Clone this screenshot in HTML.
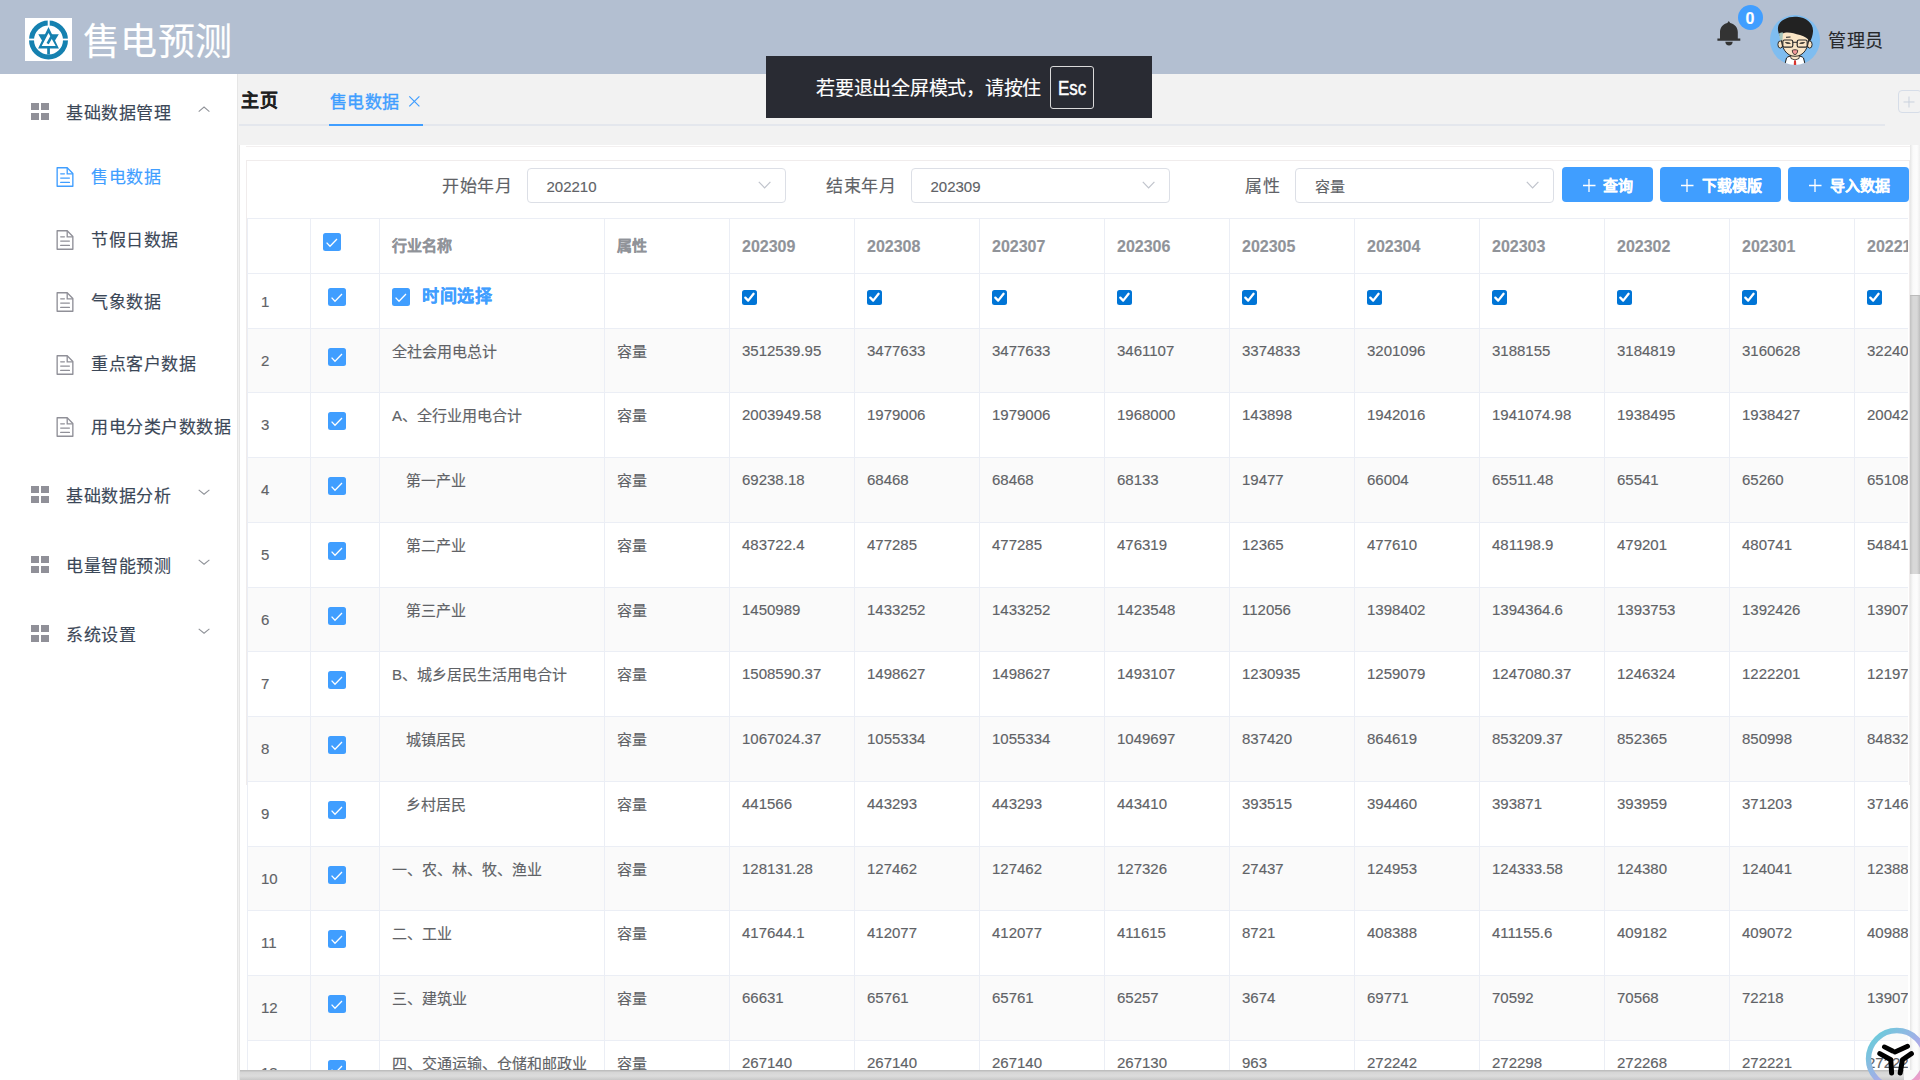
<!DOCTYPE html><html lang="zh-CN"><head><meta charset="utf-8"><style>
*{box-sizing:border-box}
html,body{margin:0;padding:0;width:1920px;height:1080px;overflow:hidden;background:#fff;font-family:'Liberation Sans', sans-serif}
.a{position:absolute;white-space:nowrap}
.t{position:absolute;white-space:nowrap;line-height:20px;-webkit-text-stroke:0.15px currentColor}
.cb{position:absolute;width:18px;height:18px;background:#409eff;border-radius:2.5px}
.cb svg{position:absolute;left:0;top:0}
.nc{position:absolute;width:15px;height:15px;background:#0075d6;border-radius:2.5px}
.nc svg{position:absolute;left:0;top:0}
.cell{font-size:15px;color:#606266}
.hd{font-size:15px;color:#909399;font-weight:bold}
.hdn{font-size:16px;color:#909399;font-weight:bold}
</style></head><body>

<div class="a" style="left:0;top:0;width:1920px;height:74px;background:#b3bfd1"></div>
<div class="a" style="left:25px;top:18px;width:47px;height:43px;background:#fff">
<svg width="47" height="43" viewBox="0 0 47 43" style="position:absolute;left:0;top:0">
<circle cx="23.5" cy="22" r="17" fill="none" stroke="#1581b0" stroke-width="5"/>
<rect x="22.7" y="0" width="2" height="8.5" fill="#fff"/>
<rect x="0" y="20.6" width="10" height="1.8" fill="#fff"/>
<rect x="37" y="20.6" width="10" height="1.8" fill="#fff"/>
<path d="M23.5 9 L33.9 30.6 L13.1 30.6 Z M23.5 14.9 L16.7 28.1 L30.7 28.1 Z" fill="#1581b0" fill-rule="evenodd"/>
<path d="M13.3 16.3 L21.6 16.3 L19.2 22 L17.6 23.5 Z" fill="#1581b0"/>
<path d="M26 16.3 L33.8 16.3 L29.7 23 Z" fill="#1581b0"/>
<path d="M27.6 16.8 L22.6 25.6" stroke="#1581b0" stroke-width="2.6"/>
<rect x="22.2" y="30" width="2.7" height="6.5" fill="#1581b0"/>
</svg></div>
<div class="t" style="left:82.5px;top:22.5px;font-size:37px;letter-spacing:0.5px;line-height:40px;color:#fff">售电预测</div>
<svg class="a" style="left:1716px;top:20px" width="26" height="27" viewBox="0 0 26 27">
<path d="M12.75 1 L14.2 2.9 C18.8 4 21.8 7.6 21.8 12 L21.8 18.6 L24.3 18.6 L24.3 20.7 L1.4 20.7 L1.4 18.6 L4 18.6 L4 12 C4 7.6 6.8 4 11.3 2.9 Z" fill="#333"/>
<path d="M9.3 21.8 L16.7 21.8 C16.7 24 15 25.6 13 25.6 C11 25.6 9.3 24 9.3 21.8 Z" fill="#333"/>
</svg>
<div class="a" style="left:1738px;top:5px;width:25px;height:25px;border-radius:50%;background:#409eff"></div>
<div class="t" style="left:1745.5px;top:8.5px;font-size:16px;font-weight:bold;color:#fff">0</div>
<svg class="a" style="left:1770px;top:15px" width="50" height="50" viewBox="0 0 50 50">
<defs><clipPath id="av"><circle cx="25" cy="25" r="25"/></clipPath></defs>
<circle cx="25" cy="25" r="25" fill="#7fbdf0"/>
<g clip-path="url(#av)">
<path d="M14.5 51 L16.5 43 C18 41.5 20 41 21.5 41 L25 44.5 L28.5 41 C30 41 32 41.5 33.5 43 L35.5 51 Z" fill="#fff" stroke="#1a1a1a" stroke-width="1"/>
<path d="M20.5 40 L29.5 40 L29 43.5 L25 45 L21 43.5 Z" fill="#fbe6c6" stroke="#1a1a1a" stroke-width="0.8"/>
<path d="M24 45.5 L26 45.5 L26.3 51 L23.7 51 Z" fill="#d8332e"/>
<ellipse cx="10.3" cy="29.5" rx="2.4" ry="3.6" fill="#fbe6c6" stroke="#1a1a1a" stroke-width="0.9"/>
<ellipse cx="39.7" cy="29.5" rx="2.4" ry="3.6" fill="#fbe6c6" stroke="#1a1a1a" stroke-width="0.9"/>
<path d="M11.3 15 L11.3 22 C11 33 16.5 41.3 25 41.3 C33.5 41.3 39 33 38.7 22 L38.7 15 Z" fill="#fbe6c6" stroke="#1a1a1a" stroke-width="0.9"/>
<path d="M8.5 17.5 C6.5 11 10 6 14 4.5 C18 2 23 1.5 27 1.8 C36 2.5 43.5 8 43 16.5 C42.8 20 41.5 24 40 26.5 C38 23.5 35 21.5 30 20 C25 18.5 20 17 16 17.5 C13 18 11 19 9.5 21 Z" fill="#222"/>
<path d="M9 18.5 C10.5 17.5 12 17.3 13 17.5 L12.5 25 L10 25.5 Z" fill="#a6c6bd"/>
<path d="M16 22.3 L20.5 22" stroke="#222" stroke-width="1"/>
<rect x="12.8" y="25" width="10" height="7.2" rx="1.8" fill="none" stroke="#2a2a2a" stroke-width="1.2"/>
<rect x="27.2" y="25" width="10" height="7.2" rx="1.8" fill="none" stroke="#2a2a2a" stroke-width="1.2"/>
<path d="M22.8 27.3 L27.2 27.3" stroke="#2a2a2a" stroke-width="1"/>
<path d="M14.8 27.6 C16.5 27 19 27 21 28.2 C19 29.3 16.5 29 14.8 27.6 Z M29 28.2 C31 27 33.5 27 35.2 27.6 C33.5 29 31 29.3 29 28.2 Z" fill="#111"/>
<path d="M22.3 35.3 C23.5 34.6 26.5 34.6 27.7 35.3 C27.6 38 26.5 39.5 25 39.5 C23.5 39.5 22.4 38 22.3 35.3 Z" fill="#f29a9a" stroke="#1a1a1a" stroke-width="0.8"/>
</g></svg>
<div class="t" style="left:1828px;top:29.7px;font-size:18px;letter-spacing:0.5px;line-height:22px;color:#26272a">管理员</div>
<div class="a" style="left:0;top:74px;width:237px;height:1006px;background:#fff"></div>
<div class="a" style="left:237px;top:74px;width:1px;height:1006px;background:#e6e6e6"></div>
<div class="a" style="left:31.4px;top:102.9px;width:7.5px;height:7px;background:#909098"></div><div class="a" style="left:31.4px;top:112.9px;width:7.5px;height:7px;background:#909098"></div><div class="a" style="left:41.4px;top:102.9px;width:7.5px;height:7px;background:#909098"></div><div class="a" style="left:41.4px;top:112.9px;width:7.5px;height:7px;background:#909098"></div>
<div class="t" style="left:66px;top:103.7px;font-size:17px;letter-spacing:0.5px;color:#3b4757">基础数据管理</div>
<svg class="a" style="left:198px;top:105.5px" width="13" height="7" viewBox="0 0 13 7"><path d="M0.7 5.6 L6.05 1 L11.4 5.6" fill="none" stroke="#909399" stroke-width="1.1"/></svg>
<div class="a" style="left:31.4px;top:485.9px;width:7.5px;height:7px;background:#909098"></div><div class="a" style="left:31.4px;top:495.9px;width:7.5px;height:7px;background:#909098"></div><div class="a" style="left:41.4px;top:485.9px;width:7.5px;height:7px;background:#909098"></div><div class="a" style="left:41.4px;top:495.9px;width:7.5px;height:7px;background:#909098"></div>
<div class="t" style="left:66px;top:486.7px;font-size:17px;letter-spacing:0.5px;color:#3b4757">基础数据分析</div>
<svg class="a" style="left:198px;top:488.5px" width="13" height="7" viewBox="0 0 13 7"><path d="M0.7 0.8 L6.05 5.2 L11.4 0.8" fill="none" stroke="#909399" stroke-width="1.1"/></svg>
<div class="a" style="left:31.4px;top:555.9px;width:7.5px;height:7px;background:#909098"></div><div class="a" style="left:31.4px;top:565.9px;width:7.5px;height:7px;background:#909098"></div><div class="a" style="left:41.4px;top:555.9px;width:7.5px;height:7px;background:#909098"></div><div class="a" style="left:41.4px;top:565.9px;width:7.5px;height:7px;background:#909098"></div>
<div class="t" style="left:66px;top:556.7px;font-size:17px;letter-spacing:0.5px;color:#3b4757">电量智能预测</div>
<svg class="a" style="left:198px;top:558.5px" width="13" height="7" viewBox="0 0 13 7"><path d="M0.7 0.8 L6.05 5.2 L11.4 0.8" fill="none" stroke="#909399" stroke-width="1.1"/></svg>
<div class="a" style="left:31.4px;top:625.4px;width:7.5px;height:7px;background:#909098"></div><div class="a" style="left:31.4px;top:635.4px;width:7.5px;height:7px;background:#909098"></div><div class="a" style="left:41.4px;top:625.4px;width:7.5px;height:7px;background:#909098"></div><div class="a" style="left:41.4px;top:635.4px;width:7.5px;height:7px;background:#909098"></div>
<div class="t" style="left:66px;top:626.2px;font-size:17px;letter-spacing:0.5px;color:#3b4757">系统设置</div>
<svg class="a" style="left:198px;top:628px" width="13" height="7" viewBox="0 0 13 7"><path d="M0.7 0.8 L6.05 5.2 L11.4 0.8" fill="none" stroke="#909399" stroke-width="1.1"/></svg>
<svg class="a" style="left:56px;top:167.0px" width="18" height="21" viewBox="0 0 18 21"><path d="M1.15 0.75 L11.2 0.75 L16.85 6.4 L16.85 19.25 L1.15 19.25 Z" fill="none" stroke="#409eff" stroke-width="1.35" stroke-linejoin="round"/><path d="M11.2 0.75 L11.2 6.9 L16.85 6.9" fill="none" stroke="#409eff" stroke-width="1.3"/><path d="M4.7 6.8 L8.4 6.8 M4.7 11.1 L13.4 11.1 M4.7 15.4 L13.4 15.4" stroke="#409eff" stroke-width="1.3" stroke-linecap="round"/></svg>
<div class="t" style="left:91px;top:167.7px;font-size:17px;letter-spacing:0.5px;color:#409eff">售电数据</div>
<svg class="a" style="left:56px;top:229.9px" width="18" height="21" viewBox="0 0 18 21"><path d="M1.15 0.75 L11.2 0.75 L16.85 6.4 L16.85 19.25 L1.15 19.25 Z" fill="none" stroke="#909098" stroke-width="1.35" stroke-linejoin="round"/><path d="M11.2 0.75 L11.2 6.9 L16.85 6.9" fill="none" stroke="#909098" stroke-width="1.3"/><path d="M4.7 6.8 L8.4 6.8 M4.7 11.1 L13.4 11.1 M4.7 15.4 L13.4 15.4" stroke="#909098" stroke-width="1.3" stroke-linecap="round"/></svg>
<div class="t" style="left:91px;top:230.6px;font-size:17px;letter-spacing:0.5px;color:#3b4757">节假日数据</div>
<svg class="a" style="left:56px;top:292.2px" width="18" height="21" viewBox="0 0 18 21"><path d="M1.15 0.75 L11.2 0.75 L16.85 6.4 L16.85 19.25 L1.15 19.25 Z" fill="none" stroke="#909098" stroke-width="1.35" stroke-linejoin="round"/><path d="M11.2 0.75 L11.2 6.9 L16.85 6.9" fill="none" stroke="#909098" stroke-width="1.3"/><path d="M4.7 6.8 L8.4 6.8 M4.7 11.1 L13.4 11.1 M4.7 15.4 L13.4 15.4" stroke="#909098" stroke-width="1.3" stroke-linecap="round"/></svg>
<div class="t" style="left:91px;top:292.9px;font-size:17px;letter-spacing:0.5px;color:#3b4757">气象数据</div>
<svg class="a" style="left:56px;top:354.7px" width="18" height="21" viewBox="0 0 18 21"><path d="M1.15 0.75 L11.2 0.75 L16.85 6.4 L16.85 19.25 L1.15 19.25 Z" fill="none" stroke="#909098" stroke-width="1.35" stroke-linejoin="round"/><path d="M11.2 0.75 L11.2 6.9 L16.85 6.9" fill="none" stroke="#909098" stroke-width="1.3"/><path d="M4.7 6.8 L8.4 6.8 M4.7 11.1 L13.4 11.1 M4.7 15.4 L13.4 15.4" stroke="#909098" stroke-width="1.3" stroke-linecap="round"/></svg>
<div class="t" style="left:91px;top:355.4px;font-size:17px;letter-spacing:0.5px;color:#3b4757">重点客户数据</div>
<svg class="a" style="left:56px;top:417.1px" width="18" height="21" viewBox="0 0 18 21"><path d="M1.15 0.75 L11.2 0.75 L16.85 6.4 L16.85 19.25 L1.15 19.25 Z" fill="none" stroke="#909098" stroke-width="1.35" stroke-linejoin="round"/><path d="M11.2 0.75 L11.2 6.9 L16.85 6.9" fill="none" stroke="#909098" stroke-width="1.3"/><path d="M4.7 6.8 L8.4 6.8 M4.7 11.1 L13.4 11.1 M4.7 15.4 L13.4 15.4" stroke="#909098" stroke-width="1.3" stroke-linecap="round"/></svg>
<div class="t" style="left:91px;top:417.8px;font-size:17px;letter-spacing:0.5px;color:#3b4757">用电分类户数数据</div>
<div class="a" style="left:238px;top:74px;width:1682px;height:1006px;background:#f2f2f2"></div>
<div class="t" style="left:240.5px;top:90.5px;font-size:18px;letter-spacing:1px;font-weight:bold;color:#1f1f1f">主页</div>
<div class="t" style="left:330px;top:93px;font-size:17px;letter-spacing:0.3px;color:#409eff;font-weight:normal;-webkit-text-stroke:0.4px #409eff">售电数据</div>
<svg class="a" style="left:408px;top:95px" width="12" height="12" viewBox="0 0 12 12"><path d="M1.3 1.3 L11.4 11.4 M11.4 1.3 L1.3 11.4" stroke="#409eff" stroke-width="1.2"/></svg>
<div class="a" style="left:239px;top:124px;width:1646px;height:2px;background:#e4e7ed"></div>
<div class="a" style="left:329px;top:124px;width:94px;height:2px;background:#409eff"></div>
<div class="a" style="left:1898px;top:90px;width:24px;height:23px;border:1px solid #d6dde8;border-radius:4px"></div>
<svg class="a" style="left:1903px;top:96.3px" width="12" height="12" viewBox="0 0 12 12"><path d="M6 0.5 L6 11.5 M0.5 6 L11.5 6" stroke="#c9d1dd" stroke-width="1"/></svg>
<div class="a" style="left:239px;top:145px;width:1681px;height:935px;background:#fff"></div>
<div class="a" style="left:239px;top:145px;width:1px;height:935px;background:#e6e6e6"></div>
<div class="a" style="left:246px;top:146px;width:1664px;height:1px;background:#f3f0f0"></div>
<div class="a" style="left:246px;top:160px;width:1664px;height:1px;background:#f0ecec"></div>
<div class="a" style="left:246px;top:160px;width:1px;height:625px;background:#f0ecec"></div>
<div class="t" style="left:442px;top:177px;font-size:17px;letter-spacing:0.5px;color:#606266">开始年月</div>
<div class="t" style="left:826px;top:177px;font-size:17px;letter-spacing:0.5px;color:#606266">结束年月</div>
<div class="t" style="left:1245px;top:177px;font-size:17px;letter-spacing:0.5px;color:#606266">属性</div>
<div class="a" style="left:527px;top:168px;width:259px;height:35px;border:1px solid #dcdfe6;border-radius:4px;background:#fff"></div><div class="t" style="left:546.5px;top:176.5px;font-size:15px;color:#606266">202210</div><svg class="a" style="left:757.5px;top:180.5px" width="14" height="8" viewBox="0 0 14 8"><path d="M0.8 0.8 L6.6 6.8 L12.4 0.8" fill="none" stroke="#c0c4cc" stroke-width="1.2"/></svg>
<div class="a" style="left:911px;top:168px;width:259px;height:35px;border:1px solid #dcdfe6;border-radius:4px;background:#fff"></div><div class="t" style="left:930.5px;top:176.5px;font-size:15px;color:#606266">202309</div><svg class="a" style="left:1141.5px;top:180.5px" width="14" height="8" viewBox="0 0 14 8"><path d="M0.8 0.8 L6.6 6.8 L12.4 0.8" fill="none" stroke="#c0c4cc" stroke-width="1.2"/></svg>
<div class="a" style="left:1295px;top:168px;width:259px;height:35px;border:1px solid #dcdfe6;border-radius:4px;background:#fff"></div><div class="t" style="left:1314.5px;top:176.5px;font-size:15px;color:#606266">容量</div><svg class="a" style="left:1525.5px;top:180.5px" width="14" height="8" viewBox="0 0 14 8"><path d="M0.8 0.8 L6.6 6.8 L12.4 0.8" fill="none" stroke="#c0c4cc" stroke-width="1.2"/></svg>
<div class="a" style="left:1562px;top:167px;width:91px;height:35px;background:#409eff;border-radius:4px"></div><svg class="a" style="left:1582.5px;top:178.7px" width="13" height="13" viewBox="0 0 13 13"><path d="M6 0 L6 13 M-0.5 6.5 L12.5 6.5" stroke="#fff" stroke-width="1.3"/></svg><div class="t" style="left:1602.5px;top:175.5px;font-size:15px;color:#fff;font-weight:bold">查询</div>
<div class="a" style="left:1660px;top:167px;width:121px;height:35px;background:#409eff;border-radius:4px"></div><svg class="a" style="left:1681px;top:178.7px" width="13" height="13" viewBox="0 0 13 13"><path d="M6 0 L6 13 M-0.5 6.5 L12.5 6.5" stroke="#fff" stroke-width="1.3"/></svg><div class="t" style="left:1701.5px;top:175.5px;font-size:15px;color:#fff;font-weight:bold">下载模版</div>
<div class="a" style="left:1788px;top:167px;width:121px;height:35px;background:#409eff;border-radius:4px"></div><svg class="a" style="left:1809px;top:178.7px" width="13" height="13" viewBox="0 0 13 13"><path d="M6 0 L6 13 M-0.5 6.5 L12.5 6.5" stroke="#fff" stroke-width="1.3"/></svg><div class="t" style="left:1830px;top:175.5px;font-size:15px;color:#fff;font-weight:bold">导入数据</div>
<div class="a" style="left:247px;top:218px;width:1661px;height:852px;overflow:hidden">
<div class="a" style="left:0;top:110px;width:1661px;height:64px;background:#fafafa"></div>
<div class="a" style="left:0;top:239px;width:1661px;height:65px;background:#fafafa"></div>
<div class="a" style="left:0;top:369px;width:1661px;height:64px;background:#fafafa"></div>
<div class="a" style="left:0;top:498px;width:1661px;height:65px;background:#fafafa"></div>
<div class="a" style="left:0;top:628px;width:1661px;height:64px;background:#fafafa"></div>
<div class="a" style="left:0;top:757px;width:1661px;height:65px;background:#fafafa"></div>
<div class="a" style="left:0;top:887px;width:1661px;height:65px;background:#fafafa"></div>
<div class="a" style="left:0;top:0px;width:1661px;height:1px;background:#ebeef5"></div>
<div class="a" style="left:0;top:55px;width:1661px;height:1px;background:#ebeef5"></div>
<div class="a" style="left:0;top:110px;width:1661px;height:1px;background:#ebeef5"></div>
<div class="a" style="left:0;top:174px;width:1661px;height:1px;background:#ebeef5"></div>
<div class="a" style="left:0;top:239px;width:1661px;height:1px;background:#ebeef5"></div>
<div class="a" style="left:0;top:304px;width:1661px;height:1px;background:#ebeef5"></div>
<div class="a" style="left:0;top:369px;width:1661px;height:1px;background:#ebeef5"></div>
<div class="a" style="left:0;top:433px;width:1661px;height:1px;background:#ebeef5"></div>
<div class="a" style="left:0;top:498px;width:1661px;height:1px;background:#ebeef5"></div>
<div class="a" style="left:0;top:563px;width:1661px;height:1px;background:#ebeef5"></div>
<div class="a" style="left:0;top:628px;width:1661px;height:1px;background:#ebeef5"></div>
<div class="a" style="left:0;top:692px;width:1661px;height:1px;background:#ebeef5"></div>
<div class="a" style="left:0;top:757px;width:1661px;height:1px;background:#ebeef5"></div>
<div class="a" style="left:0;top:822px;width:1661px;height:1px;background:#ebeef5"></div>
<div class="a" style="left:0;top:887px;width:1661px;height:1px;background:#ebeef5"></div>
<div class="a" style="left:0px;top:0;width:1px;height:852px;background:#ebeef5"></div>
<div class="a" style="left:63px;top:0;width:1px;height:852px;background:#ebeef5"></div>
<div class="a" style="left:132px;top:0;width:1px;height:852px;background:#ebeef5"></div>
<div class="a" style="left:357px;top:0;width:1px;height:852px;background:#ebeef5"></div>
<div class="a" style="left:482px;top:0;width:1px;height:852px;background:#ebeef5"></div>
<div class="a" style="left:607px;top:0;width:1px;height:852px;background:#ebeef5"></div>
<div class="a" style="left:732px;top:0;width:1px;height:852px;background:#ebeef5"></div>
<div class="a" style="left:857px;top:0;width:1px;height:852px;background:#ebeef5"></div>
<div class="a" style="left:982px;top:0;width:1px;height:852px;background:#ebeef5"></div>
<div class="a" style="left:1107px;top:0;width:1px;height:852px;background:#ebeef5"></div>
<div class="a" style="left:1232px;top:0;width:1px;height:852px;background:#ebeef5"></div>
<div class="a" style="left:1357px;top:0;width:1px;height:852px;background:#ebeef5"></div>
<div class="a" style="left:1482px;top:0;width:1px;height:852px;background:#ebeef5"></div>
<div class="a" style="left:1607px;top:0;width:1px;height:852px;background:#ebeef5"></div>
<div class="a" style="left:1732px;top:0;width:1px;height:852px;background:#ebeef5"></div>
<div class="cb" style="left:76px;top:15px"><svg width="18" height="18" viewBox="0 0 18 18"><path d="M3.6 9.6 L7 13.2 L14 6" fill="none" stroke="#fff" stroke-width="1.3"/></svg></div>
<div class="t hd" style="left:145px;top:18px">行业名称</div>
<div class="t hd" style="left:370px;top:18px">属性</div>
<div class="t hdn" style="left:495px;top:18.5px">202309</div>
<div class="t hdn" style="left:620px;top:18.5px">202308</div>
<div class="t hdn" style="left:745px;top:18.5px">202307</div>
<div class="t hdn" style="left:870px;top:18.5px">202306</div>
<div class="t hdn" style="left:995px;top:18.5px">202305</div>
<div class="t hdn" style="left:1120px;top:18.5px">202304</div>
<div class="t hdn" style="left:1245px;top:18.5px">202303</div>
<div class="t hdn" style="left:1370px;top:18.5px">202302</div>
<div class="t hdn" style="left:1495px;top:18.5px">202301</div>
<div class="t hdn" style="left:1620px;top:18.5px">202212</div>
<div class="t cell" style="left:14px;top:73.5px">1</div>
<div class="cb" style="left:81px;top:70px"><svg width="18" height="18" viewBox="0 0 18 18"><path d="M3.6 9.6 L7 13.2 L14 6" fill="none" stroke="#fff" stroke-width="1.3"/></svg></div>
<div class="cb" style="left:145px;top:70px"><svg width="18" height="18" viewBox="0 0 18 18"><path d="M3.6 9.6 L7 13.2 L14 6" fill="none" stroke="#fff" stroke-width="1.3"/></svg></div>
<div class="t" style="left:175px;top:69px;font-size:17px;letter-spacing:0.5px;color:#409eff;font-weight:bold">时间选择</div>
<div class="nc" style="left:495px;top:72px"><svg width="15" height="15" viewBox="0 0 15 15"><path d="M3.3 7.6 L6.2 10.6 L11.6 3.8" fill="none" stroke="#fff" stroke-width="2.3" stroke-linecap="round" stroke-linejoin="round"/></svg></div>
<div class="nc" style="left:620px;top:72px"><svg width="15" height="15" viewBox="0 0 15 15"><path d="M3.3 7.6 L6.2 10.6 L11.6 3.8" fill="none" stroke="#fff" stroke-width="2.3" stroke-linecap="round" stroke-linejoin="round"/></svg></div>
<div class="nc" style="left:745px;top:72px"><svg width="15" height="15" viewBox="0 0 15 15"><path d="M3.3 7.6 L6.2 10.6 L11.6 3.8" fill="none" stroke="#fff" stroke-width="2.3" stroke-linecap="round" stroke-linejoin="round"/></svg></div>
<div class="nc" style="left:870px;top:72px"><svg width="15" height="15" viewBox="0 0 15 15"><path d="M3.3 7.6 L6.2 10.6 L11.6 3.8" fill="none" stroke="#fff" stroke-width="2.3" stroke-linecap="round" stroke-linejoin="round"/></svg></div>
<div class="nc" style="left:995px;top:72px"><svg width="15" height="15" viewBox="0 0 15 15"><path d="M3.3 7.6 L6.2 10.6 L11.6 3.8" fill="none" stroke="#fff" stroke-width="2.3" stroke-linecap="round" stroke-linejoin="round"/></svg></div>
<div class="nc" style="left:1120px;top:72px"><svg width="15" height="15" viewBox="0 0 15 15"><path d="M3.3 7.6 L6.2 10.6 L11.6 3.8" fill="none" stroke="#fff" stroke-width="2.3" stroke-linecap="round" stroke-linejoin="round"/></svg></div>
<div class="nc" style="left:1245px;top:72px"><svg width="15" height="15" viewBox="0 0 15 15"><path d="M3.3 7.6 L6.2 10.6 L11.6 3.8" fill="none" stroke="#fff" stroke-width="2.3" stroke-linecap="round" stroke-linejoin="round"/></svg></div>
<div class="nc" style="left:1370px;top:72px"><svg width="15" height="15" viewBox="0 0 15 15"><path d="M3.3 7.6 L6.2 10.6 L11.6 3.8" fill="none" stroke="#fff" stroke-width="2.3" stroke-linecap="round" stroke-linejoin="round"/></svg></div>
<div class="nc" style="left:1495px;top:72px"><svg width="15" height="15" viewBox="0 0 15 15"><path d="M3.3 7.6 L6.2 10.6 L11.6 3.8" fill="none" stroke="#fff" stroke-width="2.3" stroke-linecap="round" stroke-linejoin="round"/></svg></div>
<div class="nc" style="left:1620px;top:72px"><svg width="15" height="15" viewBox="0 0 15 15"><path d="M3.3 7.6 L6.2 10.6 L11.6 3.8" fill="none" stroke="#fff" stroke-width="2.3" stroke-linecap="round" stroke-linejoin="round"/></svg></div>
<div class="t cell" style="left:14px;top:132.50px">2</div>
<div class="cb" style="left:81px;top:130px"><svg width="18" height="18" viewBox="0 0 18 18"><path d="M3.6 9.6 L7 13.2 L14 6" fill="none" stroke="#fff" stroke-width="1.3"/></svg></div>
<div class="t cell" style="left:145px;top:123.5px">全社会用电总计</div>
<div class="t cell" style="left:370px;top:123.5px">容量</div>
<div class="t cell" style="left:495px;top:122.5px">3512539.95</div>
<div class="t cell" style="left:620px;top:122.5px">3477633</div>
<div class="t cell" style="left:745px;top:122.5px">3477633</div>
<div class="t cell" style="left:870px;top:122.5px">3461107</div>
<div class="t cell" style="left:995px;top:122.5px">3374833</div>
<div class="t cell" style="left:1120px;top:122.5px">3201096</div>
<div class="t cell" style="left:1245px;top:122.5px">3188155</div>
<div class="t cell" style="left:1370px;top:122.5px">3184819</div>
<div class="t cell" style="left:1495px;top:122.5px">3160628</div>
<div class="t cell" style="left:1620px;top:122.5px">3224012</div>
<div class="t cell" style="left:14px;top:197.00px">3</div>
<div class="cb" style="left:81px;top:194px"><svg width="18" height="18" viewBox="0 0 18 18"><path d="M3.6 9.6 L7 13.2 L14 6" fill="none" stroke="#fff" stroke-width="1.3"/></svg></div>
<div class="t cell" style="left:145px;top:187.5px">A、全行业用电合计</div>
<div class="t cell" style="left:370px;top:187.5px">容量</div>
<div class="t cell" style="left:495px;top:186.5px">2003949.58</div>
<div class="t cell" style="left:620px;top:186.5px">1979006</div>
<div class="t cell" style="left:745px;top:186.5px">1979006</div>
<div class="t cell" style="left:870px;top:186.5px">1968000</div>
<div class="t cell" style="left:995px;top:186.5px">143898</div>
<div class="t cell" style="left:1120px;top:186.5px">1942016</div>
<div class="t cell" style="left:1245px;top:186.5px">1941074.98</div>
<div class="t cell" style="left:1370px;top:186.5px">1938495</div>
<div class="t cell" style="left:1495px;top:186.5px">1938427</div>
<div class="t cell" style="left:1620px;top:186.5px">2004216</div>
<div class="t cell" style="left:14px;top:262.00px">4</div>
<div class="cb" style="left:81px;top:259px"><svg width="18" height="18" viewBox="0 0 18 18"><path d="M3.6 9.6 L7 13.2 L14 6" fill="none" stroke="#fff" stroke-width="1.3"/></svg></div>
<div class="t cell" style="left:159px;top:252.5px">第一产业</div>
<div class="t cell" style="left:370px;top:252.5px">容量</div>
<div class="t cell" style="left:495px;top:251.5px">69238.18</div>
<div class="t cell" style="left:620px;top:251.5px">68468</div>
<div class="t cell" style="left:745px;top:251.5px">68468</div>
<div class="t cell" style="left:870px;top:251.5px">68133</div>
<div class="t cell" style="left:995px;top:251.5px">19477</div>
<div class="t cell" style="left:1120px;top:251.5px">66004</div>
<div class="t cell" style="left:1245px;top:251.5px">65511.48</div>
<div class="t cell" style="left:1370px;top:251.5px">65541</div>
<div class="t cell" style="left:1495px;top:251.5px">65260</div>
<div class="t cell" style="left:1620px;top:251.5px">65108</div>
<div class="t cell" style="left:14px;top:327.00px">5</div>
<div class="cb" style="left:81px;top:324px"><svg width="18" height="18" viewBox="0 0 18 18"><path d="M3.6 9.6 L7 13.2 L14 6" fill="none" stroke="#fff" stroke-width="1.3"/></svg></div>
<div class="t cell" style="left:159px;top:317.5px">第二产业</div>
<div class="t cell" style="left:370px;top:317.5px">容量</div>
<div class="t cell" style="left:495px;top:316.5px">483722.4</div>
<div class="t cell" style="left:620px;top:316.5px">477285</div>
<div class="t cell" style="left:745px;top:316.5px">477285</div>
<div class="t cell" style="left:870px;top:316.5px">476319</div>
<div class="t cell" style="left:995px;top:316.5px">12365</div>
<div class="t cell" style="left:1120px;top:316.5px">477610</div>
<div class="t cell" style="left:1245px;top:316.5px">481198.9</div>
<div class="t cell" style="left:1370px;top:316.5px">479201</div>
<div class="t cell" style="left:1495px;top:316.5px">480741</div>
<div class="t cell" style="left:1620px;top:316.5px">548412</div>
<div class="t cell" style="left:14px;top:391.50px">6</div>
<div class="cb" style="left:81px;top:389px"><svg width="18" height="18" viewBox="0 0 18 18"><path d="M3.6 9.6 L7 13.2 L14 6" fill="none" stroke="#fff" stroke-width="1.3"/></svg></div>
<div class="t cell" style="left:159px;top:382.5px">第三产业</div>
<div class="t cell" style="left:370px;top:382.5px">容量</div>
<div class="t cell" style="left:495px;top:381.5px">1450989</div>
<div class="t cell" style="left:620px;top:381.5px">1433252</div>
<div class="t cell" style="left:745px;top:381.5px">1433252</div>
<div class="t cell" style="left:870px;top:381.5px">1423548</div>
<div class="t cell" style="left:995px;top:381.5px">112056</div>
<div class="t cell" style="left:1120px;top:381.5px">1398402</div>
<div class="t cell" style="left:1245px;top:381.5px">1394364.6</div>
<div class="t cell" style="left:1370px;top:381.5px">1393753</div>
<div class="t cell" style="left:1495px;top:381.5px">1392426</div>
<div class="t cell" style="left:1620px;top:381.5px">1390726</div>
<div class="t cell" style="left:14px;top:456.00px">7</div>
<div class="cb" style="left:81px;top:453px"><svg width="18" height="18" viewBox="0 0 18 18"><path d="M3.6 9.6 L7 13.2 L14 6" fill="none" stroke="#fff" stroke-width="1.3"/></svg></div>
<div class="t cell" style="left:145px;top:446.5px">B、城乡居民生活用电合计</div>
<div class="t cell" style="left:370px;top:446.5px">容量</div>
<div class="t cell" style="left:495px;top:445.5px">1508590.37</div>
<div class="t cell" style="left:620px;top:445.5px">1498627</div>
<div class="t cell" style="left:745px;top:445.5px">1498627</div>
<div class="t cell" style="left:870px;top:445.5px">1493107</div>
<div class="t cell" style="left:995px;top:445.5px">1230935</div>
<div class="t cell" style="left:1120px;top:445.5px">1259079</div>
<div class="t cell" style="left:1245px;top:445.5px">1247080.37</div>
<div class="t cell" style="left:1370px;top:445.5px">1246324</div>
<div class="t cell" style="left:1495px;top:445.5px">1222201</div>
<div class="t cell" style="left:1620px;top:445.5px">1219726</div>
<div class="t cell" style="left:14px;top:521.00px">8</div>
<div class="cb" style="left:81px;top:518px"><svg width="18" height="18" viewBox="0 0 18 18"><path d="M3.6 9.6 L7 13.2 L14 6" fill="none" stroke="#fff" stroke-width="1.3"/></svg></div>
<div class="t cell" style="left:159px;top:511.5px">城镇居民</div>
<div class="t cell" style="left:370px;top:511.5px">容量</div>
<div class="t cell" style="left:495px;top:510.5px">1067024.37</div>
<div class="t cell" style="left:620px;top:510.5px">1055334</div>
<div class="t cell" style="left:745px;top:510.5px">1055334</div>
<div class="t cell" style="left:870px;top:510.5px">1049697</div>
<div class="t cell" style="left:995px;top:510.5px">837420</div>
<div class="t cell" style="left:1120px;top:510.5px">864619</div>
<div class="t cell" style="left:1245px;top:510.5px">853209.37</div>
<div class="t cell" style="left:1370px;top:510.5px">852365</div>
<div class="t cell" style="left:1495px;top:510.5px">850998</div>
<div class="t cell" style="left:1620px;top:510.5px">848321</div>
<div class="t cell" style="left:14px;top:586.00px">9</div>
<div class="cb" style="left:81px;top:583px"><svg width="18" height="18" viewBox="0 0 18 18"><path d="M3.6 9.6 L7 13.2 L14 6" fill="none" stroke="#fff" stroke-width="1.3"/></svg></div>
<div class="t cell" style="left:159px;top:576.5px">乡村居民</div>
<div class="t cell" style="left:370px;top:576.5px">容量</div>
<div class="t cell" style="left:495px;top:575.5px">441566</div>
<div class="t cell" style="left:620px;top:575.5px">443293</div>
<div class="t cell" style="left:745px;top:575.5px">443293</div>
<div class="t cell" style="left:870px;top:575.5px">443410</div>
<div class="t cell" style="left:995px;top:575.5px">393515</div>
<div class="t cell" style="left:1120px;top:575.5px">394460</div>
<div class="t cell" style="left:1245px;top:575.5px">393871</div>
<div class="t cell" style="left:1370px;top:575.5px">393959</div>
<div class="t cell" style="left:1495px;top:575.5px">371203</div>
<div class="t cell" style="left:1620px;top:575.5px">371462</div>
<div class="t cell" style="left:14px;top:650.50px">10</div>
<div class="cb" style="left:81px;top:648px"><svg width="18" height="18" viewBox="0 0 18 18"><path d="M3.6 9.6 L7 13.2 L14 6" fill="none" stroke="#fff" stroke-width="1.3"/></svg></div>
<div class="t cell" style="left:145px;top:641.5px">一、农、林、牧、渔业</div>
<div class="t cell" style="left:370px;top:641.5px">容量</div>
<div class="t cell" style="left:495px;top:640.5px">128131.28</div>
<div class="t cell" style="left:620px;top:640.5px">127462</div>
<div class="t cell" style="left:745px;top:640.5px">127462</div>
<div class="t cell" style="left:870px;top:640.5px">127326</div>
<div class="t cell" style="left:995px;top:640.5px">27437</div>
<div class="t cell" style="left:1120px;top:640.5px">124953</div>
<div class="t cell" style="left:1245px;top:640.5px">124333.58</div>
<div class="t cell" style="left:1370px;top:640.5px">124380</div>
<div class="t cell" style="left:1495px;top:640.5px">124041</div>
<div class="t cell" style="left:1620px;top:640.5px">123881</div>
<div class="t cell" style="left:14px;top:715.00px">11</div>
<div class="cb" style="left:81px;top:712px"><svg width="18" height="18" viewBox="0 0 18 18"><path d="M3.6 9.6 L7 13.2 L14 6" fill="none" stroke="#fff" stroke-width="1.3"/></svg></div>
<div class="t cell" style="left:145px;top:705.5px">二、工业</div>
<div class="t cell" style="left:370px;top:705.5px">容量</div>
<div class="t cell" style="left:495px;top:704.5px">417644.1</div>
<div class="t cell" style="left:620px;top:704.5px">412077</div>
<div class="t cell" style="left:745px;top:704.5px">412077</div>
<div class="t cell" style="left:870px;top:704.5px">411615</div>
<div class="t cell" style="left:995px;top:704.5px">8721</div>
<div class="t cell" style="left:1120px;top:704.5px">408388</div>
<div class="t cell" style="left:1245px;top:704.5px">411155.6</div>
<div class="t cell" style="left:1370px;top:704.5px">409182</div>
<div class="t cell" style="left:1495px;top:704.5px">409072</div>
<div class="t cell" style="left:1620px;top:704.5px">409881</div>
<div class="t cell" style="left:14px;top:780.00px">12</div>
<div class="cb" style="left:81px;top:777px"><svg width="18" height="18" viewBox="0 0 18 18"><path d="M3.6 9.6 L7 13.2 L14 6" fill="none" stroke="#fff" stroke-width="1.3"/></svg></div>
<div class="t cell" style="left:145px;top:770.5px">三、建筑业</div>
<div class="t cell" style="left:370px;top:770.5px">容量</div>
<div class="t cell" style="left:495px;top:769.5px">66631</div>
<div class="t cell" style="left:620px;top:769.5px">65761</div>
<div class="t cell" style="left:745px;top:769.5px">65761</div>
<div class="t cell" style="left:870px;top:769.5px">65257</div>
<div class="t cell" style="left:995px;top:769.5px">3674</div>
<div class="t cell" style="left:1120px;top:769.5px">69771</div>
<div class="t cell" style="left:1245px;top:769.5px">70592</div>
<div class="t cell" style="left:1370px;top:769.5px">70568</div>
<div class="t cell" style="left:1495px;top:769.5px">72218</div>
<div class="t cell" style="left:1620px;top:769.5px">139071</div>
<div class="t cell" style="left:14px;top:845.00px">13</div>
<div class="cb" style="left:81px;top:842px"><svg width="18" height="18" viewBox="0 0 18 18"><path d="M3.6 9.6 L7 13.2 L14 6" fill="none" stroke="#fff" stroke-width="1.3"/></svg></div>
<div class="t cell" style="left:145px;top:835.5px">四、交通运输、仓储和邮政业</div>
<div class="t cell" style="left:370px;top:835.5px">容量</div>
<div class="t cell" style="left:495px;top:834.5px">267140</div>
<div class="t cell" style="left:620px;top:834.5px">267140</div>
<div class="t cell" style="left:745px;top:834.5px">267140</div>
<div class="t cell" style="left:870px;top:834.5px">267130</div>
<div class="t cell" style="left:995px;top:834.5px">963</div>
<div class="t cell" style="left:1120px;top:834.5px">272242</div>
<div class="t cell" style="left:1245px;top:834.5px">272298</div>
<div class="t cell" style="left:1370px;top:834.5px">272268</div>
<div class="t cell" style="left:1495px;top:834.5px">272221</div>
<div class="t cell" style="left:1620px;top:834.5px">272222</div>
</div>
<div class="a" style="left:1909px;top:160px;width:1px;height:625px;background:#f0ecec"></div>
<div class="a" style="left:1910px;top:145px;width:10px;height:935px;background:linear-gradient(to right,#e6e6e6,#fafafa 30%,#fdfdfd 70%,#efefef)"></div>
<div class="a" style="left:1910px;top:295px;width:10px;height:279px;background:linear-gradient(to right,#c0c0c0,#d8d8d8 30%,#d8d8d8 70%,#bdbdbd);border-top:1px solid #bbb"></div>
<div class="a" style="left:240px;top:1070px;width:1664px;height:10px;background:linear-gradient(#b8b8b8 0,#d6d6d6 25%,#dcdcdc 60%,#c8c8c8 100%)"></div>
<div class="a" style="left:1904px;top:1070px;width:16px;height:10px;background:#f8f8f8"></div>
<div class="a" style="left:766px;top:56px;width:386px;height:62px;background:#292b33"></div>
<div class="t" style="left:816px;top:78.1px;font-size:19px;letter-spacing:-0.25px;line-height:22px;color:#fff">若要退出全屏模式，请按住</div>
<div class="a" style="left:1050px;top:66px;width:44px;height:42.5px;border:1.6px solid #dadada;border-radius:3px"></div>
<div class="t" style="left:1058px;top:77px;font-size:19.5px;line-height:22px;color:#fff;font-weight:normal;-webkit-text-stroke:0.45px #fff;transform:scaleX(0.87);transform-origin:0 0">Esc</div>
<svg class="a" style="left:1860px;top:1020px" width="60" height="60" viewBox="0 0 60 60">
<defs><linearGradient id="rg" x1="0.1" y1="0.1" x2="0.9" y2="0.9"><stop offset="0" stop-color="#6ccadb"/><stop offset="0.55" stop-color="#a8ace8"/><stop offset="1" stop-color="#f59cc4"/></linearGradient></defs>
<circle cx="36.8" cy="38.8" r="28.3" fill="none" stroke="url(#rg)" stroke-width="5.4"/>
<path d="M24.4 26.9 L32.6 31" fill="none" stroke="#000" stroke-width="4.8" stroke-linecap="round"/>
<path d="M35 32 L47.6 26.3" fill="none" stroke="#000" stroke-width="4.8" stroke-linecap="round"/>
<path d="M19.8 33.6 L30.8 39.8 L31.6 53" fill="none" stroke="#000" stroke-width="5" stroke-linecap="round" stroke-linejoin="round"/>
<path d="M51.4 33.6 L42.4 39.8 L40.2 53" fill="none" stroke="#000" stroke-width="5" stroke-linecap="round" stroke-linejoin="round"/>
</svg>
</body></html>
